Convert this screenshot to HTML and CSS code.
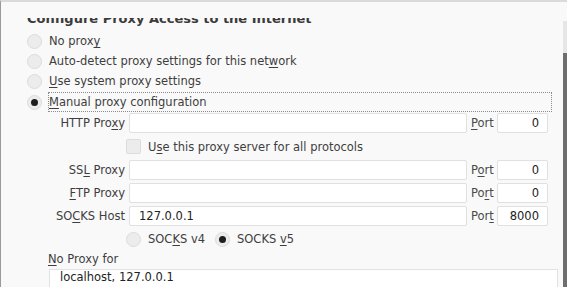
FILE: index.html
```html
<!DOCTYPE html>
<html lang="en">
<head>
    <meta charset="UTF-8">
    <meta name="viewport" content="width=device-width, initial-scale=1.0">
    <title>Connection Settings</title>
    <link rel="stylesheet" href="styles.css">
</head>
<body>
    <div id="window">
        <div id="pane">
            <div id="scroll-area">
                <h2 class="heading">Configure Proxy Access to the Internet</h2>

                <div class="radio-list">
                    <label class="radio-row"><span class="radio"></span><span>No prox<u>y</u></span></label>
                    <label class="radio-row"><span class="radio"></span><span>Auto-detect proxy settings for this net<u>w</u>ork</span></label>
                    <label class="radio-row"><span class="radio"></span><span><u>U</u>se system proxy settings</span></label>
                    <label class="radio-row focused"><span class="radio checked"></span><span class="focus-box"><u>M</u>anual proxy configuration</span></label>
                </div>

                <div class="proxy-grid">
                    <span class="field-label">HTTP Pro<u>x</u>y</span>
                    <span class="input"></span>
                    <span class="port-label"><u>P</u>ort</span>
                    <span class="input port">0</span>

                    <label class="check-row"><span class="checkbox"></span><span>U<u>s</u>e this proxy server for all protocols</span></label>

                    <span class="field-label">SS<u>L</u> Proxy</span>
                    <span class="input"></span>
                    <span class="port-label">P<u>o</u>rt</span>
                    <span class="input port">0</span>

                    <span class="field-label"><u>F</u>TP Proxy</span>
                    <span class="input"></span>
                    <span class="port-label">Po<u>r</u>t</span>
                    <span class="input port">0</span>

                    <span class="field-label">SO<u>C</u>KS Host</span>
                    <span class="input">127.0.0.1</span>
                    <span class="port-label">Por<u>t</u></span>
                    <span class="input port">8000</span>

                    <div class="socks-row">
                        <label class="radio-row"><span class="radio"></span><span>SOC<u>K</u>S v4</span></label>
                        <label class="radio-row"><span class="radio checked"></span><span>SOCKS <u>v</u>5</span></label>
                    </div>
                </div>

                <div class="no-proxy-label"><u>N</u>o Proxy for</div>
                <div class="textarea">localhost, 127.0.0.1</div>
            </div>
            <div class="scrollbar"><div class="thumb"></div></div>
        </div>
    </div>
</body>
</html>
```

FILE: styles.css
```css
/* Reset */
* { margin: 0; padding: 0; box-sizing: border-box; }
body { width: 567px; height: 287px; overflow: hidden; background-color: #f9f9f9; color: #3e3e3e; font-family: "DejaVu Sans", Verdana, sans-serif; font-size: 11.5px; }
u { text-decoration: underline; text-underline-offset: 2px; }

/* Window frame */
#window { height: 100%; border-top: 2px solid #dadada; border-left: 1px solid #9a9a9a; }
#pane { display: flex; height: 100%; padding-top: 16px; }
#scroll-area { flex: 1; overflow: hidden; padding-left: 26px; }

/* heading is scrolled partly out of view */
.heading { font-size: 13px; font-weight: bold; color: #3b3b3b; margin-top: -6px; height: 13px; line-height: 13px; white-space: nowrap; }

/* Radios */
.radio-list { display: flex; flex-direction: column; margin-top: 6px; }
.radio-row { display: flex; align-items: center; gap: 7px; height: 20px; white-space: nowrap; }
.radio { width: 15px; height: 15px; border-radius: 50%; background-color: #ececec; border: 1px solid #dcdcdc; flex-shrink: 0; position: relative; }
.radio.checked::after { content: ""; position: absolute; left: 3px; top: 3px; width: 7px; height: 7px; border-radius: 50%; background-color: #1e1e1e; }
.focused { margin-top: 1px; }
.focus-box { width: 504px; height: 20px; line-height: 18px; border: 1px dotted #8c8c8c; margin-left: -1px; }

/* Proxy fields */
.proxy-grid { display: grid; grid-template-columns: 73px 338px 22px 51px; column-gap: 4px; row-gap: 3px; margin-left: 25px; margin-top: 1px; align-items: center; }
.field-label { text-align: right; white-space: nowrap; }
.port-label { white-space: nowrap; color: #4a4a4a; }
.input { height: 20px; background-color: #fff; border: 1px solid #e0e0e0; border-radius: 2px; line-height: 18px; padding-left: 9px; color: #222; }
.input.port { text-align: right; padding-right: 8px; }
.check-row { grid-column: 2 / 5; display: flex; align-items: center; gap: 7px; height: 21px; margin-left: -3px; }
.checkbox { width: 15px; height: 15px; background-color: #ececec; border: 1px solid #dcdcdc; border-radius: 2px; }
.socks-row { grid-column: 2 / 5; display: flex; gap: 10px; margin-left: -3px; height: 20px; }

/* No proxy */
.no-proxy-label { margin-top: 0; margin-left: 21px; height: 20px; line-height: 20px; }
.textarea { margin-left: 22px; width: 509px; height: 40px; background-color: #fff; border: 1px solid #e2e2e2; padding: 0 10px; color: #222; }

/* Scrollbar */
.scrollbar { width: 4px; margin-top: 3px; background-color: #e6e6e6; display: flex; flex-direction: column; }
.thumb { margin-top: 32px; flex: 1; background-color: #6e6e6e; }
```
